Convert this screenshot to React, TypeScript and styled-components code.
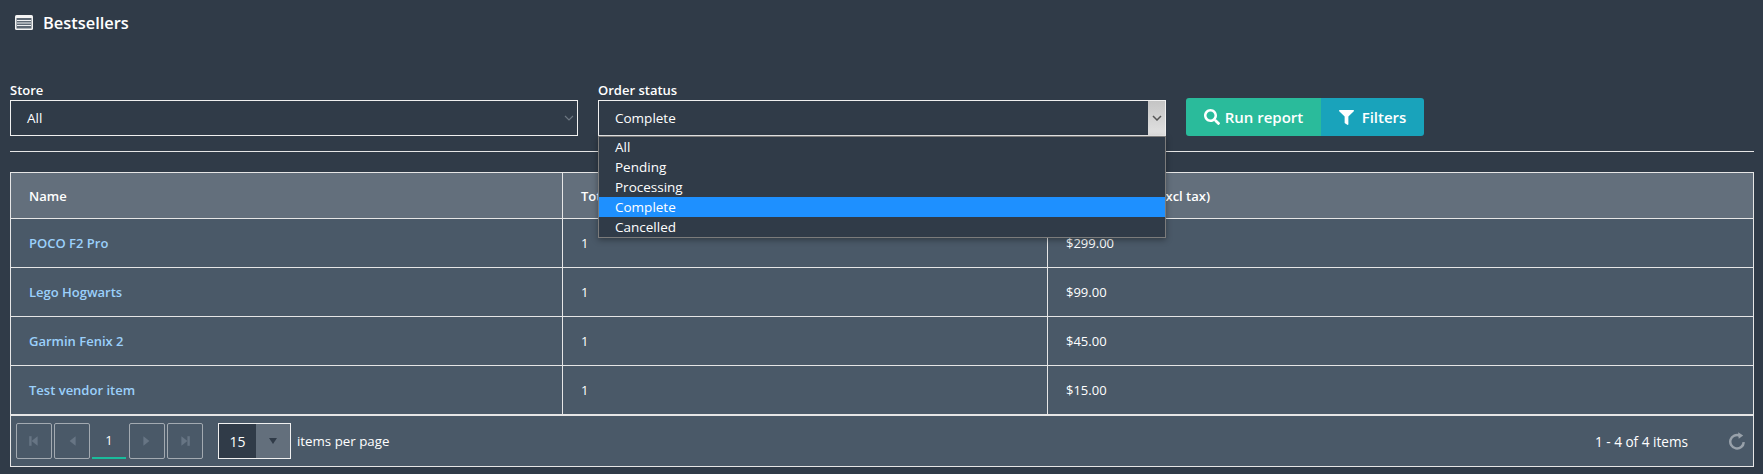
import { createGlobalStyle, styled } from "styled-components";
import { FaSearch, FaFilter } from "react-icons/fa";

const GlobalStyle = createGlobalStyle`
  html, body {
    margin: 0;
    background: #303b48;
    color: #fff;
    font-family: "Open Sans", "Liberation Sans", sans-serif;
    font-size: 13px;
    overflow: hidden;
  }
  * { box-sizing: border-box; }
`;

const Page = styled.div`
  width: 1763px;
  height: 474px;
  padding: 0 9px 0 10px;
`;

const TitleRow = styled.div`
  display: flex;
  align-items: center;
  gap: 10px;
  height: 44px;
  margin-left: 5px;
  font-size: 16.4px;
  font-weight: 600;
`;

const FilterRow = styled.div`
  display: flex;
  align-items: flex-start;
  margin-top: 36px;
  height: 72px;
  border-bottom: 1px solid #e6e6e6;
`;

const Field = styled.div`
  position: relative;
  width: 568px;
  margin-right: 20px;
`;

const FieldLabel = styled.div`
  height: 20px;
  line-height: 20px;
  font-size: 13px;
  font-weight: 600;
`;

const SelectBox = styled.div`
  display: flex;
  align-items: center;
  justify-content: space-between;
  height: 36px;
  padding-left: 16px;
  border: 1px solid #f0f0f0;
  background: #303b48;
  font-size: 13.5px;
`;

const Arrow = styled.div<{ $open?: boolean }>`
  display: flex;
  align-items: center;
  justify-content: center;
  width: 17px;
  height: 34px;
  color: ${(p) => (p.$open ? "#555" : "#6c7681")};
  background: ${(p) => (p.$open ? "linear-gradient(#c4c4c4, #e2e2e2)" : "transparent")};
`;

const Dropdown = styled.div`
  position: absolute;
  top: 56px;
  left: 0;
  width: 100%;
  height: 102px;
  background: #303b48;
  border: 1px solid #7b7b7b;
  box-shadow: 0 2px 6px rgba(0, 0, 0, 0.35);
  z-index: 5;
`;

const Option = styled.div<{ $active?: boolean }>`
  height: 20px;
  line-height: 20px;
  padding-left: 16px;
  font-size: 13.5px;
  background: ${(p) => (p.$active ? "#1e90ff" : "transparent")};
`;

const ButtonGroup = styled.div`
  display: flex;
  height: 38px;
  margin-top: 18px;
  border-radius: 3px;
  overflow: hidden;
`;

const ActionButton = styled.div<{ $bg: string; $w: number; $gap: number }>`
  display: flex;
  align-items: center;
  justify-content: center;
  gap: ${(p) => p.$gap}px;
  width: ${(p) => p.$w}px;
  background: ${(p) => p.$bg};
  font-size: 15px;
  font-weight: 600;
`;

const TableWrap = styled.div`
  margin-top: 20px;
  border: 1px solid #e6e6e6;
  background: #4a5968;
`;

const Row = styled.div<{ $head?: boolean }>`
  display: grid;
  grid-template-columns: 551px 485px 1fr;
  height: ${(p) => (p.$head ? 46 : 49)}px;
  background: ${(p) => (p.$head ? "#636f7c" : "#4a5968")};
  border-bottom: 1px solid #e6e6e6;
  font-weight: ${(p) => (p.$head ? 600 : 400)};
`;

const Cell = styled.div`
  display: flex;
  align-items: center;
  padding-left: 18px;
  border-left: 1px solid #e6e6e6;
  &:first-child { border-left: 0; padding-left: 18px; }
`;

const NameLink = styled.span`
  color: #9bd0fb;
  font-weight: 600;
`;

const Pager = styled.div`
  display: flex;
  align-items: center;
  height: 51px;
  padding: 0 7px 0 5px;
  border-top: 1px solid #e6e6e6;
`;

const PageButton = styled.div`
  display: flex;
  align-items: center;
  justify-content: center;
  width: 36px;
  height: 36px;
  margin-right: 2px;
  border: 1px solid #a3aab1;
  border-radius: 2px;
  color: #677584;
`;

const CurrentPage = styled.div`
  display: flex;
  align-items: center;
  justify-content: center;
  width: 34px;
  height: 36px;
  margin-right: 3px;
  border-bottom: 2px solid #1abc9c;
`;

const SizePicker = styled.div`
  display: flex;
  width: 73px;
  height: 36px;
  margin-left: 13px;
  border: 1px solid #f0f0f0;
`;

const SizeValue = styled.div`
  flex: 1;
  display: flex;
  align-items: center;
  justify-content: center;
  background: #303b48;
  font-size: 14px;
`;

const SizeArrow = styled.div`
  width: 34px;
  display: flex;
  align-items: center;
  justify-content: center;
  background: #636f7c;
  color: #303b48;
`;

const PerPage = styled.span`
  margin-left: 6px;
  font-size: 13.3px;
`;

const Summary = styled.span`
  margin-left: auto;
  margin-right: 40px;
  font-size: 13.6px;
`;

const Triangle = ({ dir, bar }: { dir: "left" | "right"; bar?: boolean }) => (
  <svg width="12" height="12" viewBox="0 0 10 10" fill="currentColor">
    {dir === "left" ? <path d="M8 1v8L3 5z" /> : <path d="M2 1v8l5-4z" />}
    {bar && (dir === "left" ? <rect x="1" y="1" width="2" height="8" /> : <rect x="7" y="1" width="2" height="8" />)}
  </svg>
);

const rows = [
  { name: "POCO F2 Pro", total: "1", amount: "$299.00" },
  { name: "Lego Hogwarts", total: "1", amount: "$99.00" },
  { name: "Garmin Fenix 2", total: "1", amount: "$45.00" },
  { name: "Test vendor item", total: "1", amount: "$15.00" },
];

const options = ["All", "Pending", "Processing", "Complete", "Cancelled"];

export default function App() {
  return (
    <Page>
      <GlobalStyle />
      <TitleRow>
        <svg width="18" height="15" viewBox="0 0 18 15">
          <rect x="0" y="0" width="18" height="15" rx="1.5" fill="#f4f4f4" />
          <rect x="1.5" y="3" width="15" height="10.5" fill="#5d6874" />
          <path d="M2 5.5h14M2 8h14M2 10.5h14" stroke="#eef0f2" strokeWidth="1" />
        </svg>
        Bestsellers
      </TitleRow>
      <FilterRow>
        <Field>
          <FieldLabel>Store</FieldLabel>
          <SelectBox>
            All
            <Arrow>
              <svg width="10" height="6" viewBox="0 0 10 6" fill="none" stroke="currentColor" strokeWidth="1.2">
                <path d="M1 1l4 4 4-4" />
              </svg>
            </Arrow>
          </SelectBox>
        </Field>
        <Field>
          <FieldLabel>Order status</FieldLabel>
          <SelectBox>
            Complete
            <Arrow $open>
              <svg width="10" height="6" viewBox="0 0 10 6" fill="none" stroke="currentColor" strokeWidth="1.5">
                <path d="M1 1l4 4 4-4" />
              </svg>
            </Arrow>
          </SelectBox>
          <Dropdown>
            {options.map((o) => (
              <Option key={o} $active={o === "Complete"}>
                {o}
              </Option>
            ))}
          </Dropdown>
        </Field>
        <ButtonGroup>
          <ActionButton $bg="#2abb9b" $w={135} $gap={5}>
            <FaSearch size={16} /> Run report
          </ActionButton>
          <ActionButton $bg="#19a3bb" $w={103} $gap={8}>
            <FaFilter size={15} /> Filters
          </ActionButton>
        </ButtonGroup>
      </FilterRow>
      <TableWrap>
        <Row $head>
          <Cell>Name</Cell>
          <Cell>Total quantity</Cell>
          <Cell>Total amount (excl tax)</Cell>
        </Row>
        {rows.map((r) => (
          <Row key={r.name}>
            <Cell>
              <NameLink>{r.name}</NameLink>
            </Cell>
            <Cell>{r.total}</Cell>
            <Cell>{r.amount}</Cell>
          </Row>
        ))}
        <Pager>
          <PageButton><Triangle dir="left" bar /></PageButton>
          <PageButton><Triangle dir="left" /></PageButton>
          <CurrentPage>1</CurrentPage>
          <PageButton><Triangle dir="right" /></PageButton>
          <PageButton><Triangle dir="right" bar /></PageButton>
          <SizePicker>
            <SizeValue>15</SizeValue>
            <SizeArrow>
              <svg width="10" height="6" viewBox="0 0 10 6" fill="currentColor">
                <path d="M1 0h8L5 6z" />
              </svg>
            </SizeArrow>
          </SizePicker>
          <PerPage>items per page</PerPage>
          <Summary>1 - 4 of 4 items</Summary>
          <svg width="18" height="18" viewBox="0 0 16 16" fill="none" stroke="#98a1aa" strokeWidth="2.2">
            <path d="M10.5 3.2A6 6 0 1 0 14 9" />
            <path d="M9 0.3l4.5 2.7-4 3z" fill="#98a1aa" stroke="none" />
          </svg>
        </Pager>
      </TableWrap>
    </Page>
  );
}
